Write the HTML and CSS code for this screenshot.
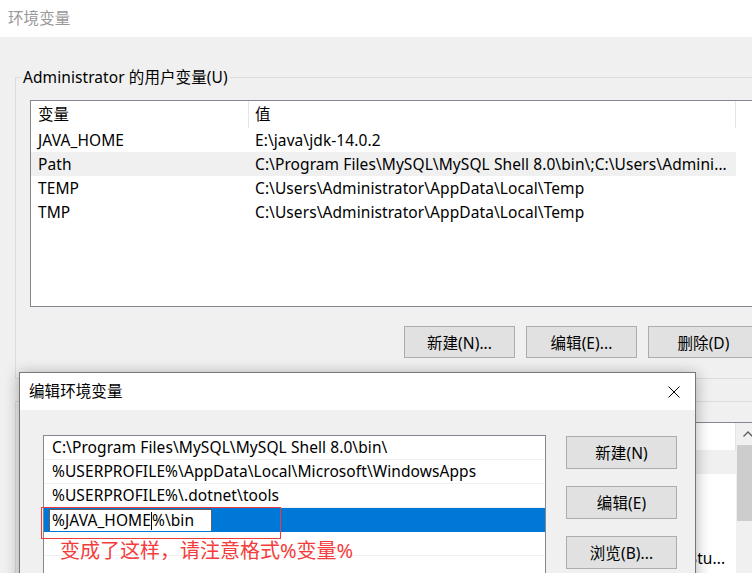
FILE: index.html
```html
<!DOCTYPE html>
<html lang="zh-CN">
<head>
<meta charset="utf-8">
<title>环境变量</title>
<link rel="stylesheet" href="styles.css">
</head>
<body>
<div class="window">
  <div class="titlebar">环境变量</div>
  <div class="content">
    <section class="group group-user">
      <div class="group-title">Administrator 的用户变量(U)</div>
      <div class="listview list-user">
        <div class="lv-header">
          <div class="lv-col c1">变量</div>
          <div class="lv-col c2">值</div>
        </div>
        <div class="lv-row"><div class="c1">JAVA_HOME</div><div class="c2">E:\java\jdk-14.0.2</div></div>
        <div class="lv-row sel"><div class="c1">Path</div><div class="c2">C:\Program Files\MySQL\MySQL Shell 8.0\bin\;C:\Users\Admini...</div></div>
        <div class="lv-row"><div class="c1">TEMP</div><div class="c2">C:\Users\Administrator\AppData\Local\Temp</div></div>
        <div class="lv-row"><div class="c1">TMP</div><div class="c2">C:\Users\Administrator\AppData\Local\Temp</div></div>
      </div>
      <div class="btn-row">
        <button class="btn">新建(N)...</button>
        <button class="btn">编辑(E)...</button>
        <button class="btn">删除(D)</button>
      </div>
    </section>

    <section class="group group-sys">
      <div class="group-title">系统变量(S)</div>
      <div class="listview list-sys">
        <div class="lv-main">
          <div class="lv-header">
            <div class="lv-col c1">变量</div>
            <div class="lv-col c2">值</div>
          </div>
          <div class="lv-row sel"><div class="c1">ComSpec</div><div class="c2">C:\Windows\system32\cmd.exe</div></div>
          <div class="lv-row"><div class="c1">DriverData</div><div class="c2">C:\Windows\System32\Drivers\DriverData</div></div>
          <div class="lv-row"><div class="c1">NUMBER_OF_PROCESSORS</div><div class="c2">8</div></div>
          <div class="lv-row"><div class="c1">OS</div><div class="c2">Windows_NT</div></div>
          <div class="lv-row"><div class="c1">Path</div><div class="c2">C:\Windows\system32;C:\Windows;D:\Program Files\Visual Stu...</div></div>
          <div class="lv-row"><div class="c1">PATHEXT</div><div class="c2">.COM;.EXE;.BAT;.CMD</div></div>
        </div>
        <div class="scrollbar">
          <div class="sb-arrow">
            <svg width="10" height="6" viewBox="0 0 10 6"><path d="M0.5 5.5 L5 1 L9.5 5.5" fill="none" stroke="#606060" stroke-width="1.4"/></svg>
          </div>
          <div class="sb-thumb"></div>
        </div>
      </div>
    </section>
  </div>
</div>

<div class="dialog">
  <div class="dlg-titlebar">
    <span class="dlg-title">编辑环境变量</span>
    <span class="dlg-close">
      <svg width="12" height="12" viewBox="0 0 12 12"><path d="M0.5 0.5 L11.5 11.5 M11.5 0.5 L0.5 11.5" stroke="#000" stroke-width="1"/></svg>
    </span>
  </div>
  <div class="dlg-body">
    <div class="path-list">
      <div class="path-item">C:\Program Files\MySQL\MySQL Shell 8.0\bin\</div>
      <div class="path-item">%USERPROFILE%\AppData\Local\Microsoft\WindowsApps</div>
      <div class="path-item">%USERPROFILE%\.dotnet\tools</div>
      <div class="path-item editing">
        <div class="edit-box">%JAVA_HOME<span class="caret"></span>%\bin</div>
      </div>
      <div class="path-item"></div>
      <div class="path-item"></div>
    </div>
    <div class="dlg-buttons">
      <button class="btn dlg-btn">新建(N)</button>
      <button class="btn dlg-btn">编辑(E)</button>
      <button class="btn dlg-btn">浏览(B)...</button>
    </div>
  </div>
  <div class="note-box"></div>
  <div class="note-text">变成了这样，请注意格式%变量%</div>
</div>
</body>
</html>
```

FILE: styles.css
```css
* {
  box-sizing: border-box;
}

html, body {
  margin: 0;
  width: 752px;
  height: 573px;
  overflow: hidden;
}

body {
  position: relative;
  background: #f0f0f0;
  font-family: "Noto Sans", "Noto Sans CJK SC", sans-serif;
  font-size: 15.5px;
  letter-spacing: 0.08px;
  color: #000;
}

/* main window */
.titlebar {
  height: 37px;
  background: #fff;
  padding-left: 8px;
  line-height: 36px;
  color: #999;
}

.content {
  padding: 40px 0 0 15px;
}

.group {
  box-sizing: content-box;
  width: 800px;
  border: 1px solid #dcdcdc;
  padding: 0 0 0 14px;
}

.group-user {
  height: 300px;
}

.group-sys {
  margin-top: 22px;
  height: 300px;
}

.group-title {
  width: max-content;
  height: 20px;
  line-height: 20px;
  margin: -11px 0 0 -9px;
  padding: 0 2px;
  background: #f0f0f0;
}

.listview {
  width: 729px;
  background: #fff;
  border: 1px solid #828790;
}

.list-user {
  height: 207px;
  margin-top: 13px;
}

.list-sys {
  display: flex;
  height: 200px;
  margin-top: 11px;
}

.lv-main {
  width: 705px;
}

.lv-header {
  display: flex;
  height: 27px;
  line-height: 27px;
}

.lv-header .lv-col {
  border-right: 1px solid #e5e5e5;
}

.c1 {
  width: 218px;
  flex: none;
  padding-left: 7px;
  white-space: nowrap;
  overflow: hidden;
}

.c2 {
  width: 487px;
  flex: none;
  padding-left: 6px;
  white-space: nowrap;
  overflow: hidden;
}

.lv-row {
  display: flex;
  width: 705px;
  height: 24px;
  line-height: 24px;
}

.lv-row.sel {
  background: #f0f0f0;
}

.scrollbar {
  width: 22px;
  flex: none;
  background: #f0f0f0;
  padding-left: 1px;
}

.sb-arrow {
  height: 22px;
  display: flex;
  align-items: center;
  justify-content: center;
}

.sb-thumb {
  height: 76px;
  background: #cdcdcd;
}

.btn-row {
  display: flex;
  gap: 11px;
  margin: 19px 0 0 374px;
}

.btn {
  width: 111px;
  height: 32px;
  padding: 0;
  background: #e1e1e1;
  border: 1px solid #adadad;
  font: inherit;
  letter-spacing: inherit;
  color: #000;
  text-align: center;
}

/* edit dialog floating above the main window */
.dialog {
  position: absolute;
  left: 19px;
  top: 372px;
  width: 677px;
  height: 230px;
  background: #f0f0f0;
  border: 1px solid #777;
  box-shadow: 0 2px 14px rgba(0, 0, 0, 0.32);
}

.dlg-titlebar {
  display: flex;
  justify-content: space-between;
  height: 37px;
  background: #fff;
  line-height: 37px;
  padding-left: 9px;
}

.dlg-close {
  width: 42px;
  display: flex;
  align-items: center;
  justify-content: center;
}

.dlg-body {
  display: flex;
  align-items: flex-start;
  padding: 25px 0 0 23px;
}

.path-list {
  width: 503px;
  height: 160px;
  background: #fff;
  border: 1px solid #828790;
}

.path-item {
  height: 24px;
  line-height: 23px;
  padding-left: 8px;
  border-bottom: 1px solid #f0f0f0;
  white-space: nowrap;
  overflow: hidden;
}

.path-item.editing {
  background: #0078d7;
  border-bottom-color: #0078d7;
  padding: 1px 0 0 5px;
}

.edit-box {
  width: 163px;
  height: 23px;
  line-height: 21px;
  padding-left: 2px;
  background: #fff;
  border: 1px solid #606060;
}

.caret {
  display: inline-block;
  width: 1px;
  height: 18px;
  background: #000;
  vertical-align: -4px;
}

.dlg-buttons {
  display: flex;
  flex-direction: column;
  gap: 17px;
  margin: 1px 0 0 20px;
}

.dlg-btn {
  height: 33px;
}

/* red annotation marks */
.note-box {
  position: absolute;
  left: 21px;
  top: 134px;
  width: 240px;
  height: 32px;
  border: 1px solid #ec3b3b;
}

.note-text {
  position: absolute;
  left: 40px;
  top: 167px;
  font-size: 20px;
  letter-spacing: 0;
  line-height: 22px;
  color: #f43c3c;
  white-space: nowrap;
}
```
